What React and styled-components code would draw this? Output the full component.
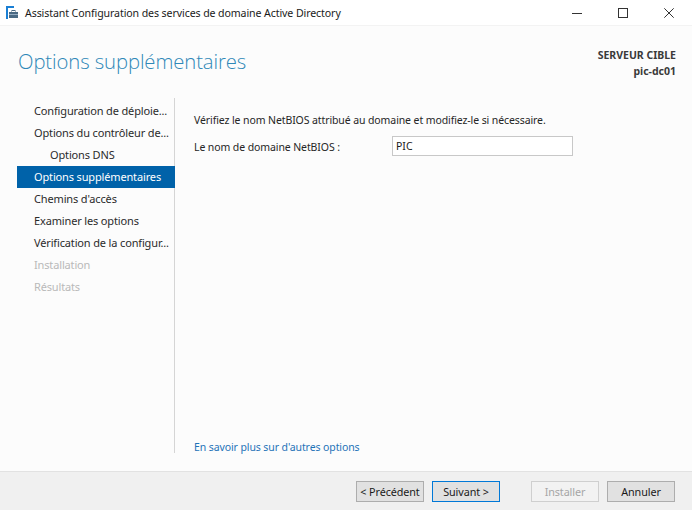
import React from "react";
import styled, { createGlobalStyle } from "styled-components";

const Global = createGlobalStyle`
  html, body { margin: 0; padding: 0; background: #fcfcfc; }
  body { font-family: "Noto Sans", "Open Sans", sans-serif; color: #1e1e1e; }
  * { box-sizing: border-box; }
`;

const Window = styled.div`
  width: 692px;
  height: 510px;
  display: flex;
  flex-direction: column;
  background: #fcfcfc;
  overflow: hidden;
`;

const TitleBar = styled.div`
  height: 26px;
  flex: 0 0 26px;
  display: flex;
  align-items: center;
  background: #ffffff;
  padding-left: 6px;
  border-bottom: 1px solid #f3f3f3;
`;

const TitleText = styled.span`
  font-size: 10.6px;
  color: #1a1a1a;
  margin-left: 7px;
  letter-spacing: -0.1px;
`;

const Controls = styled.div`
  margin-left: auto;
  display: flex;
  height: 100%;
`;

const ControlBtn = styled.div`
  width: 46px;
  height: 100%;
  display: flex;
  align-items: center;
  justify-content: center;
`;

const Header = styled.div`
  display: flex;
  justify-content: space-between;
  align-items: flex-start;
  padding: 20px 16px 0 18px;
  height: 71px;
  flex: 0 0 71px;
`;

const Heading = styled.h1`
  margin: 0;
  font-family: "Open Sans", "Noto Sans", sans-serif;
  font-weight: 300;
  font-size: 20.3px;
  color: #2f88b8;
  line-height: 30px;
  letter-spacing: -0.1px;
`;

const Target = styled.div`
  text-align: right;
  font-size: 10.5px;
  font-weight: 700;
  color: #3a3a3a;
  line-height: 16px;
  margin-top: 1px;
`;

const Body = styled.div`
  flex: 1;
  display: flex;
  padding-left: 17px;
  min-height: 0;
`;

const Sidebar = styled.nav`
  width: 158px;
  flex: 0 0 158px;
  border-right: 1px solid #d5d5d5;
  margin-top: 1px;
  margin-bottom: 18px;
  display: flex;
  flex-direction: column;
  padding-top: 2px;
`;

const NavItem = styled.div`
  height: 22px;
  line-height: 22px;
  font-size: 11px;
  padding-left: ${(p) => (p.$indent ? 33 : 17)}px;
  padding-right: 2px;
  white-space: nowrap;
  overflow: hidden;
  text-overflow: ellipsis;
  letter-spacing: -0.15px;
  margin-right: ${(p) => (p.$active ? -1 : 0)}px;
  color: ${(p) => (p.$active ? "#ffffff" : p.$disabled ? "#b9b9b9" : "#2b2b2b")};
  background: ${(p) => (p.$active ? "#0062a9" : "transparent")};
`;

const Content = styled.div`
  flex: 1;
  display: flex;
  flex-direction: column;
  padding: 15px 0 17px 19px;
`;

const Paragraph = styled.p`
  margin: 0;
  font-size: 10.5px;
  line-height: 16px;
  color: #262626;
  letter-spacing: -0.1px;
`;

const FieldRow = styled.div`
  display: flex;
  align-items: center;
  margin-top: 8px;
`;

const Label = styled.label`
  width: 198px;
  font-size: 10.5px;
  color: #262626;
  letter-spacing: -0.1px;
  padding-top: 1px;
`;

const Input = styled.div`
  width: 181px;
  height: 20px;
  border: 1px solid #c8c8c8;
  background: #ffffff;
  font-size: 10.5px;
  line-height: 18px;
  padding-left: 3px;
  color: #1a1a1a;
`;

const Link = styled.a`
  margin-top: auto;
  font-size: 10.5px;
  color: #1f73b8;
  text-decoration: none;
  letter-spacing: -0.1px;
`;

const Footer = styled.div`
  height: 39px;
  flex: 0 0 39px;
  background: #f0f0f0;
  border-top: 1px solid #e2e2e2;
  display: flex;
  align-items: center;
  justify-content: flex-end;
  padding-right: 17px;
  padding-top: 1px;
`;

const Button = styled.button`
  width: 68px;
  height: 21px;
  margin-left: ${(p) => p.$gap || 8}px;
  font-family: inherit;
  font-size: 10.8px;
  padding: 0;
  background: ${(p) => (p.$disabled ? "#f2f2f2" : "#e1e1e1")};
  color: ${(p) => (p.$disabled ? "#a6a6a6" : "#1a1a1a")};
  border: 1px solid ${(p) => (p.$primary ? "#0078d7" : p.$disabled ? "#cfcfcf" : "#adadad")};
  letter-spacing: -0.1px;
`;

const AppIcon = () => (
  <svg width="12" height="13" viewBox="0 0 12 13">
    <rect x="0" y="0" width="2" height="13" fill="#1a7fd4" />
    <rect x="2" y="0" width="6" height="2" fill="#1a7fd4" />
    <rect x="3" y="6" width="9" height="6" fill="#4a6a84" />
    <rect x="6" y="4.5" width="3" height="2" fill="none" stroke="#4a6a84" strokeWidth="1" />
    <rect x="3" y="8" width="9" height="0.8" fill="#a8c0d4" />
  </svg>
);

const steps = [
  { label: "Configuration de déploie..." },
  { label: "Options du contrôleur de..." },
  { label: "Options DNS", indent: true },
  { label: "Options supplémentaires", active: true },
  { label: "Chemins d'accès" },
  { label: "Examiner les options" },
  { label: "Vérification de la configur..." },
  { label: "Installation", disabled: true },
  { label: "Résultats", disabled: true },
];

export default function App() {
  return (
    <>
      <Global />
      <Window>
        <TitleBar>
          <AppIcon />
          <TitleText>Assistant Configuration des services de domaine Active Directory</TitleText>
          <Controls>
            <ControlBtn>
              <svg width="10" height="10" viewBox="0 0 10 10">
                <line x1="0" y1="5.5" x2="10" y2="5.5" stroke="#333" strokeWidth="1" />
              </svg>
            </ControlBtn>
            <ControlBtn>
              <svg width="10" height="10" viewBox="0 0 10 10">
                <rect x="0.5" y="0.5" width="9" height="9" fill="none" stroke="#333" strokeWidth="1" />
              </svg>
            </ControlBtn>
            <ControlBtn>
              <svg width="10" height="10" viewBox="0 0 10 10">
                <path d="M0.3 0.3 L9.7 9.7 M9.7 0.3 L0.3 9.7" stroke="#333" strokeWidth="1" />
              </svg>
            </ControlBtn>
          </Controls>
        </TitleBar>
        <Header>
          <Heading>Options supplémentaires</Heading>
          <Target>
            SERVEUR CIBLE
            <br />
            pic-dc01
          </Target>
        </Header>
        <Body>
          <Sidebar>
            {steps.map((s) => (
              <NavItem key={s.label} $indent={s.indent} $active={s.active} $disabled={s.disabled}>
                {s.label}
              </NavItem>
            ))}
          </Sidebar>
          <Content>
            <Paragraph>Vérifiez le nom NetBIOS attribué au domaine et modifiez-le si nécessaire.</Paragraph>
            <FieldRow>
              <Label>Le nom de domaine NetBIOS :</Label>
              <Input>PIC</Input>
            </FieldRow>
            <Link href="#">En savoir plus sur d'autres options</Link>
          </Content>
        </Body>
        <Footer>
          <Button>&lt; Précédent</Button>
          <Button $primary>Suivant &gt;</Button>
          <Button $disabled $gap={31}>Installer</Button>
          <Button>Annuler</Button>
        </Footer>
      </Window>
    </>
  );
}
